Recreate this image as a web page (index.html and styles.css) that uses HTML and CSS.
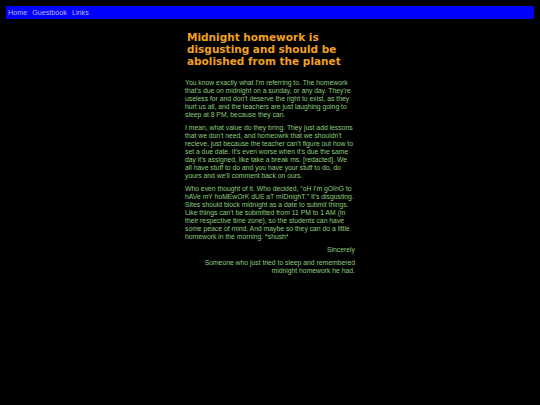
FILE: index.html
```html
<!DOCTYPE html>
<html>
<head>
<meta charset="utf-8">
<link rel="stylesheet" href="styles.css">
</head>
<body>
<nav class="nav">
  <a href="#">Home</a>
  <a href="#">Guestbook</a>
  <a href="#">Links</a>
</nav>
<main class="content">
  <h1 class="title">Midnight homework is disgusting and should be abolished from the planet</h1>
  <p>You know exactly what I'm referring to. The homework that's due on midnight on a sunday, or any day. They're useless for and don't deserve the right to exist, as they hurt us all, and the teachers are just laughing going to sleep at 8 PM, because they can.</p>
  <p>I mean, what value do they bring. They just add lessons that we don't need, and homeowrk that we shouldn't recieve, just because the teacher can't figure out how to set a due date. It's even worse when it's due the same day it's assigned, like take a break ms. [redacted]. We all have stuff to do and you have your stuff to do, do yours and we'll comment back on ours.</p>
  <p>Who even thought of it. Who decided, "oH I'm gOInG to hAVe mY hoMEwOrK dUE aT mIDnighT." It's disgusting. Sites should block midnight as a date to submit things. Like things can't be submitted from 11 PM to 1 AM (in their respective time zone), so the students can have some peace of mind. And maybe so they can do a little homework in the morning. *shush*</p>
  <p class="right">Sincerely</p>
  <p class="right">Someone who just tried to sleep and remembered midnight homework he had.</p>
</main>
</body>
</html>
```
FILE: styles.css
```css
html, body {
  margin: 0;
  padding: 0;
  background: #000;
}
body {
  padding: 6px;
  font-family: "Liberation Sans", Arial, sans-serif;
}
.nav {
  background: #0000ff;
  height: 13px;
  display: flex;
  align-items: center;
  gap: 5px;
  padding: 0 2px;
  font-size: 7.2px;
}
.nav a {
  color: #b8b8ff;
  text-decoration: none;
}
.content {
  width: 170px;
  margin: 0 auto;
  color: #8ccc7c;
  font-size: 6.8px;
  line-height: 8px;
}
.title {
  font-family: "DejaVu Sans", Verdana, sans-serif;
  font-weight: bold;
  color: #f0a020;
  font-size: 10.5px;
  line-height: 12px;
  margin: 12px 0 12px 2px;
}
.content p {
  margin: 0 0 5px 0;
}
.content p.right {
  text-align: right;
}
```
